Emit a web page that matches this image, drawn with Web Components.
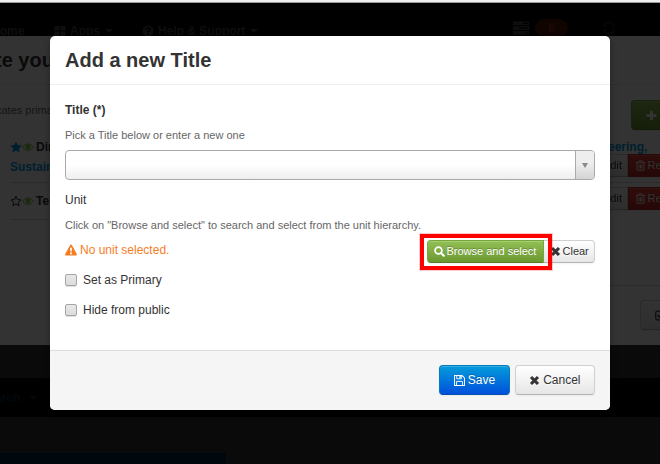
<!DOCTYPE html>
<html lang="en">
<head>
<meta charset="utf-8">
<title>Add a new Title</title>
<style>
  body {
    margin: 0;
    height: 464px;
    overflow: hidden;
    position: relative;
    font: 12px/20px "Liberation Sans", Arial, sans-serif;
    color: #333;
    background: #333;
  }
</style>
</head>
<body>
<page-backdrop></page-backdrop>
<modal-dialog>
  <span slot="title">Add a new Title</span>
  <title-form></title-form>
  <ui-button slot="footer" kind="primary" icon="save">Save</ui-button>
  <ui-button slot="footer" icon="remove">Cancel</ui-button>
</modal-dialog>

<script>
// icon name -> [viewBox, markup]
const icons = {
  search: ['0 0 12 12', '<circle cx="4.9" cy="4.9" r="3.7" fill="none" stroke="currentColor" stroke-width="1.9"/><path d="M7.6 7.6 10.7 10.7" stroke="currentColor" stroke-width="2.2" stroke-linecap="round"/>'],
  remove: ['0 0 12 12', '<path d="M2.2 2.2 9.8 9.8M9.8 2.2 2.2 9.8" stroke="currentColor" stroke-width="3.4"/>'],
  save: ['0 0 12 12', '<path d="M.6 .6H8.8L11.4 3.2V11.4H.6Z" fill="none" stroke="currentColor" stroke-width="1.1"/><path d="M3 .8V4.2H8V.8M2.8 11.2V7H9.2V11.2" fill="none" stroke="currentColor" stroke-width="1"/><path d="M5.8 1H7.3V3.5H5.8Z"/>'],
  warning: ['0 0 12 12', '<path fill-rule="evenodd" d="M5.3.8Q6 0 6.7.8L11.9 10.3Q12 11.5 11 11.6H1Q0 11.5.1 10.3ZM5 3.8 5.3 7.6H6.7L7 3.8ZM5.1 8.5V10.2H6.9V8.5Z"/>'],
  star: ['0 0 12 12', '<path d="M6 .4 7.7 4.1 11.8 4.6 8.8 7.4 9.6 11.5 6 9.5 2.4 11.5 3.2 7.4.2 4.6 4.3 4.1Z"/>'],
  starEmpty: ['0 0 12 12', '<path fill="none" stroke="currentColor" stroke-width="1" d="M6 1.2 7.4 4.5 11 4.9 8.3 7.2 9.1 10.8 6 9 2.9 10.8 3.7 7.2 1 4.9 4.6 4.5Z"/>'],
  eye: ['0 0 12 12', '<path d="M.4 6.3Q6-.6 11.6 6.3 6 12.9.4 6.3Z" fill="none" stroke="currentColor" stroke-width="1"/><circle cx="6" cy="5.8" r="2.6"/>'],
  plus: ['0 0 12 12', '<path d="M4.4 .7H7.6V4.4H11.3V7.6H7.6V11.3H4.4V7.6H.7V4.4H4.4Z"/>'],
  trash: ['0 0 12 12', '<path d="M1 2.6H11M4 2.4 4.6.8H7.4L8 2.4M2.2 3V11.2H9.8V3M4.4 4.8V9.4M6 4.8V9.4M7.6 4.8V9.4" fill="none" stroke="currentColor" stroke-width="1"/>'],
  check: ['0 0 12 12', '<rect x=".8" y="1.3" width="9.4" height="9.4" rx="1.6" fill="none" stroke="currentColor" stroke-width="1.3"/><path d="M3 5.6 5.4 8 11 2.4" fill="none" stroke="currentColor" stroke-width="1.8"/>'],
  grid: ['0 0 12 12', '<path d="M.5 1H5.5V5.6H.5ZM6.5 1H11.5V5.6H6.5ZM.5 6.5H5.5V11H.5ZM6.5 6.5H11.5V11H6.5Z"/>'],
  help: ['0 0 12 12', '<circle cx="6" cy="6" r="5.5"/><path d="M4 4.6Q4.2 2.8 6 2.8 8 2.9 8 4.5 7.8 5.5 6 6.3V7.3M6 8.3V9.8" fill="none" stroke="#000" stroke-width="1.6"/>'],
  tasks: ['0 0 16 14', '<path fill-rule="evenodd" d="M0 .5H16V4.2H0ZM10 1.8V2.9H15V1.8ZM0 5.3H16V9H0ZM6 6.6V7.7H15V6.6ZM0 10.1H16V13.8H0ZM12 11.4V12.5H15V11.4Z"/>'],
  refresh: ['0 0 12 12', '<path d="M1 5.2A5 5 0 0 1 10.5 3.4M11 6.8A5 5 0 0 1 1.5 8.6" fill="none" stroke="currentColor" stroke-width="1.7"/><path d="M11.8.8V5H7.6ZM.2 11.2V7H4.4Z"/>'],
};

class UiIcon extends HTMLElement {
  constructor() {
    super();
    this.attachShadow({ mode: 'open' });
  }

  connectedCallback() {
    const [box, markup] = icons[this.getAttribute('name')];
    this.shadowRoot.innerHTML = `
      <style>
        :host { display: inline-block; width: 12px; height: 12px; flex: none; }
        svg { display: block; width: 100%; height: 100%; fill: currentColor; }
      </style>
      <svg viewBox="${box}">${markup}</svg>
    `;
  }
}
customElements.define('ui-icon', UiIcon);

class UiButton extends HTMLElement {
  constructor() {
    super();
    this.attachShadow({ mode: 'open' });
  }

  connectedCallback() {
    const icon = this.getAttribute('icon');
    this.shadowRoot.innerHTML = `
      <style>
        :host {
          display: inline-flex;
          align-items: center;
          gap: 3px;
          box-sizing: border-box;
          height: 30px;
          padding: 0 13.5px;
          border: 1px solid #ccc;
          border-color: #d0d0d0 #d0d0d0 #b3b3b3;
          border-radius: 4px;
          background: linear-gradient(#fff, #e6e6e6);
          box-shadow: inset 0 1px 0 rgba(255, 255, 255, .2), 0 1px 2px rgba(0, 0, 0, .05);
          color: #333;
          text-shadow: 0 1px 1px rgba(255, 255, 255, .75);
          white-space: nowrap;
        }
        :host([kind]) { color: #fff; text-shadow: 0 -1px 0 rgba(0, 0, 0, .25); }
        :host([kind="primary"]) {
          background: linear-gradient(#049cdb, #0150dc);
          border-color: #0378bb #0378bb #0150b0;
        }
        :host([kind="success"]) {
          background: linear-gradient(#92c055, #6b9831);
          border-color: #77a63a #77a63a #577d28;
        }
        :host([kind="danger"]) {
          background: linear-gradient(#ee3f3f, #bd2626);
          border-color: #b92c2c;
        }
        :host([small]) { height: 23px; padding: 0 5.5px 1px; font-size: 11px; gap: 2px; }
        ui-icon { width: 11px; height: 11px; }
      </style>
      ${icon ? `<ui-icon name="${icon}"></ui-icon>` : ''}
      <slot></slot>
    `;
  }
}
customElements.define('ui-button', UiButton);

const dialogTemplate = document.createElement('template');
dialogTemplate.innerHTML = `
  <style>
    :host {
      position: absolute;
      top: 36px;
      left: 50px;
      width: 560px;
      height: 374px;
      display: flex;
      flex-direction: column;
      border-radius: 5px;
      overflow: hidden;
      background: #fff;
      box-shadow: 0 3px 7px rgba(0, 0, 0, .3);
    }
    header {
      box-sizing: border-box;
      height: 49px;
      padding: 9px 15px;
      border-bottom: 1px solid #eee;
      font-size: 20px;
      font-weight: bold;
      line-height: 30px;
    }
    main { flex: 1; padding: 15px; }
    footer {
      display: flex;
      justify-content: flex-end;
      gap: 5px;
      padding: 14px 15px 15px;
      border-top: 1px solid #ddd;
      background: #f5f5f5;
    }
  </style>
  <header><slot name="title"></slot></header>
  <main><slot></slot></main>
  <footer><slot name="footer"></slot></footer>
`;

class ModalDialog extends HTMLElement {
  constructor() {
    super();
    this.attachShadow({ mode: 'open' }).appendChild(dialogTemplate.content.cloneNode(true));
  }
}
customElements.define('modal-dialog', ModalDialog);

const selectTemplate = document.createElement('template');
selectTemplate.innerHTML = `
  <style>
    :host {
      display: flex;
      box-sizing: border-box;
      height: 30px;
      border: 1px solid #aaa;
      border-radius: 4px;
      overflow: hidden;
      background: linear-gradient(#fff 50%, #eee);
    }
    .value { flex: 1; }
    .arrow {
      width: 18px;
      display: flex;
      align-items: center;
      justify-content: center;
      border-left: 1px solid #aaa;
      background: linear-gradient(#eee 40%, #d4d4d4);
    }
    .arrow::after {
      content: "";
      border: solid transparent;
      border-width: 5px 3px 0;
      border-top-color: #888;
    }
  </style>
  <div class="value"></div>
  <div class="arrow"></div>
`;

class SelectBox extends HTMLElement {
  constructor() {
    super();
    this.attachShadow({ mode: 'open' }).appendChild(selectTemplate.content.cloneNode(true));
  }
}
customElements.define('select-box', SelectBox);

const checkTemplate = document.createElement('template');
checkTemplate.innerHTML = `
  <style>
    :host { display: flex; align-items: center; gap: 6px; height: 20px; }
    i {
      box-sizing: border-box;
      width: 12px;
      height: 12px;
      border: 1px solid #a5a5a5;
      border-radius: 2px;
      background: linear-gradient(#e8e8e8, #dcdcdc);
      box-shadow: 0 1px 0 #ddd;
    }
  </style>
  <i></i><slot></slot>
`;

class CheckOption extends HTMLElement {
  constructor() {
    super();
    this.attachShadow({ mode: 'open' }).appendChild(checkTemplate.content.cloneNode(true));
  }
}
customElements.define('check-option', CheckOption);

const formTemplate = document.createElement('template');
formTemplate.innerHTML = `
  <style>
    :host { display: flex; flex-direction: column; }
    .hint { margin: 5px 0; font-size: 11px; color: #666; }
    .label { margin-top: 10px; }
    .unit { display: flex; justify-content: space-between; height: 25px; }
    .none { display: flex; align-items: center; gap: 3px; height: 20px; color: #f57d1f; }
    .group { display: flex; position: relative; }
    .group ui-button:first-child { box-sizing: border-box; width: 117px; border-radius: 4px 0 0 4px; z-index: 1; }
    .group ui-button:nth-child(2) { width: 52px; border-radius: 0 4px 4px 0; margin-left: -1px; }
    /* highlight frame laid over the browse button */
    .mark {
      position: absolute;
      z-index: 2;
      left: -7px;
      top: -6px;
      width: 124px;
      height: 28px;
      border: 4px solid #f00;
      outline: 1px solid rgba(255, 0, 0, .2);
    }
    check-option { margin-top: 5px; }
    check-option + check-option { margin-top: 10px; }
  </style>
  <b>Title (*)</b>
  <div class="hint">Pick a Title below or enter a new one</div>
  <select-box></select-box>
  <div class="label">Unit</div>
  <div class="hint">Click on "Browse and select" to search and select from the unit hierarchy.</div>
  <div class="unit">
    <div class="none"><ui-icon name="warning"></ui-icon>No unit selected.</div>
    <div class="group">
      <ui-button small kind="success" icon="search">Browse and select</ui-button>
      <ui-button small icon="remove">Clear</ui-button>
      <div class="mark"></div>
    </div>
  </div>
  <check-option>Set as Primary</check-option>
  <check-option>Hide from public</check-option>
`;

class TitleForm extends HTMLElement {
  constructor() {
    super();
    this.attachShadow({ mode: 'open' }).appendChild(formTemplate.content.cloneNode(true));
  }
}
customElements.define('title-form', TitleForm);

const pageTemplate = document.createElement('template');
pageTemplate.innerHTML = `
  <style>
    :host { display: flex; flex-direction: column; height: 464px; overflow: hidden; background: #0a0a0a; }
    .chrome { flex: none; box-sizing: border-box; height: 3px; background: #efeeee; border-bottom: 1px solid #999; }
    nav {
      flex: none;
      box-sizing: border-box;
      display: flex;
      height: 33px;
      padding-top: 18px;
      background: #000;
      color: #0e0e0e;
      font-weight: bold;
    }
    nav span { display: flex; align-items: center; gap: 4px; height: 20px; white-space: nowrap; }
    .home { width: 54px; }
    .home b { margin-left: -9px; }
    .apps { width: 88px; }
    .help { width: 371px; }
    .caret::after { content: ""; margin-left: 1px; border: solid transparent; border-width: 4px 4px 0; border-top-color: currentColor; }
    nav ui-icon[name="tasks"] { width: 16px; height: 14px; }
    nav .queue, nav .sync { height: 13px; }
    nav .sync { color: #070707; }
    nav .badge { box-sizing: border-box; width: 33px; height: 18px; margin: -2px 35px 0 6px; border-radius: 9px; background: #0f0400; justify-content: center; color: #1b0a04; }

    /* page panel as it appears under the dimmed overlay */
    .panel { flex: none; height: 309px; display: flex; justify-content: space-between; background: #333; overflow: hidden; }
    .left { width: 50px; white-space: nowrap; color: #0a0a0a; }
    .right { width: 50px; white-space: nowrap; color: #0a0a0a; }
    h1 { box-sizing: border-box; margin: 0; height: 49px; padding-top: 9px; border-bottom: 1px solid #303030; font-size: 20px; line-height: 30px; text-indent: -5px; }
    .note { height: 52px; padding-top: 15px; box-sizing: border-box; font-size: 11px; color: #141414; text-indent: -4px; }
    .row { display: flex; align-items: center; margin-left: 10px; height: 20px; font-weight: bold; }
    .row b { margin-left: 2px; }
    .row ui-icon[name="eye"] { color: #1c290f; }
    .link { color: #001f2e; font-weight: bold; }
    .rule { margin: 5px 0 8px 10px; border-top: 1px solid #2b2b2b; }
    .right .rule { margin: 5px 0 4px; }
    .cap { box-sizing: border-box; height: 49px; border-bottom: 1px solid #303030; }
    .add { padding: 15px 0 0 21px; height: 37px; }
    .dim { filter: brightness(.2); }
    .pair { display: flex; margin-left: -15px; }
    .pair ui-button { border-radius: 0; flex: none; }
    .pair ui-button:first-child { width: 33px; justify-content: flex-end; padding-right: 5px; }
    .eer { height: 17px; margin-left: -2px; }
    .end { margin-top: 75px; padding: 14px 0 0 30px; border-top: 1px solid #2b2b2b; }

    .gap { flex: none; height: 33px; }
    .foot { flex: none; height: 39px; display: flex; align-items: center; gap: 8px; background: #000; color: #00080d; font-weight: bold; }
    .foot b { margin-left: -5px; }
    .blue { width: 226px; height: 11px; margin-top: 36px; background: #00070d; }
  </style>
  <div class="chrome"></div>
  <nav>
    <span class="home"><b>Home</b></span>
    <span class="apps caret"><ui-icon name="grid"></ui-icon>Apps</span>
    <span class="help caret"><ui-icon name="help"></ui-icon>Help &amp; Support</span>
    <span class="queue"><ui-icon name="tasks"></ui-icon></span>
    <span class="badge">6</span>
    <span class="sync"><ui-icon name="refresh"></ui-icon></span>
  </nav>
  <div class="panel">
    <div class="left">
      <h1>te you</h1>
      <div class="note">cates prima</div>
      <div class="row"><ui-icon name="star" style="color:#001f2e"></ui-icon><ui-icon name="eye"></ui-icon><b>Dir</b></div>
      <div class="row link">Sustain</div>
      <div class="rule"></div>
      <div class="row"><ui-icon name="starEmpty"></ui-icon><ui-icon name="eye"></ui-icon><b>Te</b></div>
      <div class="rule" style="margin-top:8px"></div>
    </div>
    <div class="right">
      <div class="cap"></div>
      <div class="add"><ui-button class="dim" kind="success" icon="plus">Add</ui-button></div>
      <div class="link eer">eering,</div>
      <div class="pair dim"><ui-button small>Edit</ui-button><ui-button small kind="danger" icon="trash">Re</ui-button></div>
      <div class="rule"></div>
      <div class="pair dim"><ui-button small>Edit</ui-button><ui-button small kind="danger" icon="trash">Re</ui-button></div>
      <div class="end"><ui-button class="dim" icon="check">Set</ui-button></div>
    </div>
  </div>
  <div class="gap"></div>
  <div class="foot caret"><b>arch</b></div>
  <div class="blue"></div>
`;

class PageBackdrop extends HTMLElement {
  constructor() {
    super();
    this.attachShadow({ mode: 'open' }).appendChild(pageTemplate.content.cloneNode(true));
  }
}
customElements.define('page-backdrop', PageBackdrop);
</script>
</body>
</html>
